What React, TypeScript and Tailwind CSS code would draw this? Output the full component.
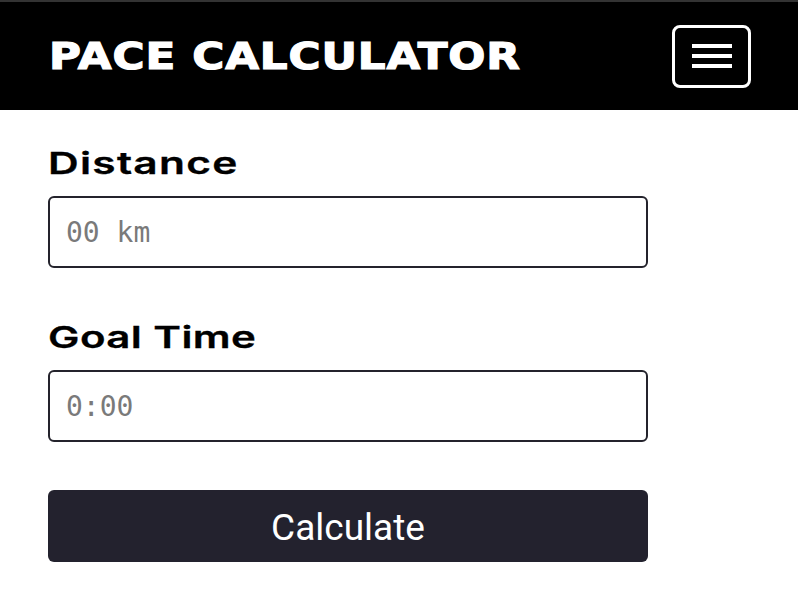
import React, { useState } from 'react';

const App: React.FC = () => {
  const [distance, setDistance] = useState('');
  const [time, setTime] = useState('');

  return (
    <div className="min-h-screen bg-white overflow-hidden">
      <header className="h-[110px] bg-black border-t-2 border-[#333333] flex items-center justify-between pl-[49px] pr-[47px]">
        <h1 className="font-['DejaVu_Sans',sans-serif] font-bold text-white text-[37px] leading-none tracking-[0.02em] scale-x-[1.18] origin-left whitespace-nowrap [-webkit-text-stroke:1.2px_white]">
          PACE CALCULATOR
        </h1>
        <button
          type="button"
          aria-label="Menu"
          className="w-[79px] h-[63px] border-[3px] border-white rounded-[8px] flex flex-col items-center justify-center gap-[6px]"
        >
          <span className="block w-[40px] h-[4px] bg-white" />
          <span className="block w-[40px] h-[4px] bg-white" />
          <span className="block w-[40px] h-[4px] bg-white" />
        </button>
      </header>

      <form
        onSubmit={(e) => e.preventDefault()}
        className="px-[48px] pt-[33px] flex flex-col items-start font-['Inter',sans-serif]"
      >
        <label className="block h-[40px] leading-[40px] text-[30px] font-semibold text-black tracking-[0.03em] scale-x-[1.415] origin-left whitespace-nowrap [-webkit-text-stroke:0.3px_black]">
          Distance
        </label>
        <input
          value={distance}
          onChange={(e) => setDistance(e.target.value)}
          placeholder="00 km"
          className="mt-[13px] w-[600px] h-[72px] border-2 border-[#24232c] rounded-[6px] px-[16px] font-['DejaVu_Sans_Mono',monospace] text-[28px] text-black placeholder:text-[#7a7a7a] outline-none"
        />

        <label className="mt-[49px] block h-[40px] leading-[40px] text-[30px] font-semibold text-black tracking-[0.01em] scale-x-[1.4] origin-left whitespace-nowrap [-webkit-text-stroke:0.3px_black]">
          Goal Time
        </label>
        <input
          value={time}
          onChange={(e) => setTime(e.target.value)}
          placeholder="0:00"
          className="mt-[13px] w-[600px] h-[72px] border-2 border-[#24232c] rounded-[6px] px-[16px] font-['DejaVu_Sans_Mono',monospace] text-[28px] text-black placeholder:text-[#7a7a7a] outline-none"
        />

        <button
          type="submit"
          className="mt-[48px] w-[600px] h-[72px] bg-[#23222e] rounded-[6px] text-white text-[37px] font-['Roboto',sans-serif] leading-none pt-[2px]"
        >
          Calculate
        </button>
      </form>
    </div>
  );
};

export default App;
